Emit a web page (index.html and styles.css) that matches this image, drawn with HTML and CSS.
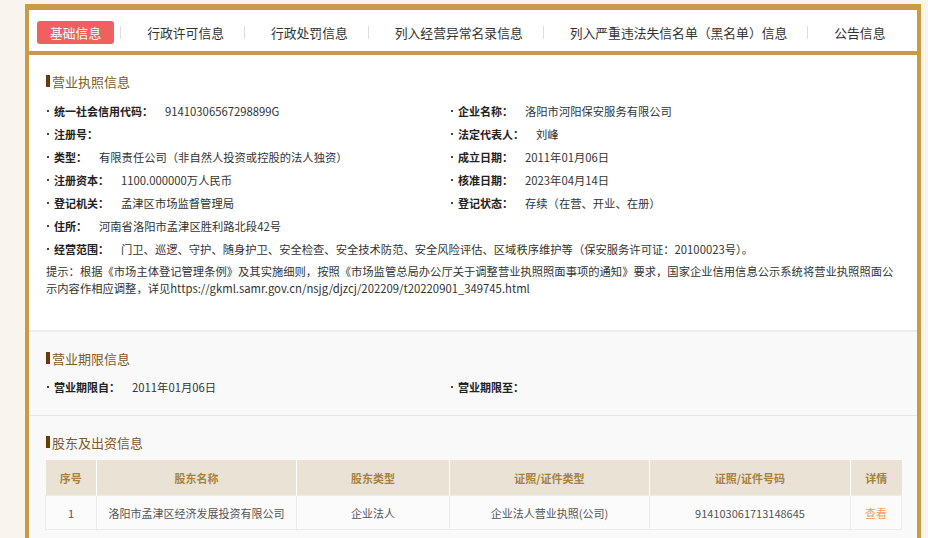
FILE: index.html
```html
<!DOCTYPE html>
<html lang="zh-CN">
<head>
    <meta charset="UTF-8">
    <title>基础信息</title>
    <link rel="stylesheet" href="styles.css">
</head>
<body>
    <div class="panel">
        <div class="tabs">
            <span class="tab active">基础信息</span>
            <span class="tab">行政许可信息</span>
            <span class="tab">行政处罚信息</span>
            <span class="tab">列入经营异常名录信息</span>
            <span class="tab">列入严重违法失信名单（黑名单）信息</span>
            <span class="tab">公告信息</span>
        </div>

        <div class="section license">
            <h3 class="title">营业执照信息</h3>
            <div class="fields">
                <div class="field"><b>统一社会信用代码：</b><span>91410306567298899G</span></div>
                <div class="field"><b>企业名称：</b><span>洛阳市河阳保安服务有限公司</span></div>
                <div class="field"><b>注册号：</b><span></span></div>
                <div class="field"><b>法定代表人：</b><span>刘峰</span></div>
                <div class="field"><b>类型：</b><span>有限责任公司（非自然人投资或控股的法人独资）</span></div>
                <div class="field"><b>成立日期：</b><span>2011年01月06日</span></div>
                <div class="field"><b>注册资本：</b><span>1100.000000万人民币</span></div>
                <div class="field"><b>核准日期：</b><span>2023年04月14日</span></div>
                <div class="field"><b>登记机关：</b><span>孟津区市场监督管理局</span></div>
                <div class="field"><b>登记状态：</b><span>存续（在营、开业、在册）</span></div>
                <div class="field wide"><b>住所：</b><span>河南省洛阳市孟津区胜利路北段42号</span></div>
                <div class="field wide"><b>经营范围：</b><span>门卫、巡逻、守护、随身护卫、安全检查、安全技术防范、安全风险评估、区域秩序维护等（保安服务许可证：20100023号）。</span></div>
            </div>
            <p class="hint">提示：根据《市场主体登记管理条例》及其实施细则，按照《市场监管总局办公厅关于调整营业执照照面事项的通知》要求，国家企业信用信息公示系统将营业执照照面公示内容作相应调整，详见https://gkml.samr.gov.cn/nsjg/djzcj/202209/t20220901_349745.html</p>
        </div>

        <div class="section term">
            <h3 class="title">营业期限信息</h3>
            <div class="fields">
                <div class="field"><b>营业期限自：</b><span>2011年01月06日</span></div>
                <div class="field"><b>营业期限至：</b><span></span></div>
            </div>
        </div>

        <div class="section holders">
            <h3 class="title">股东及出资信息</h3>
            <table class="grid">
                <colgroup>
                    <col class="c-no">
                    <col class="c-name">
                    <col class="c-type">
                    <col class="c-cert">
                    <col class="c-code">
                    <col class="c-more">
                </colgroup>
                <thead>
                    <tr>
                        <th>序号</th>
                        <th>股东名称</th>
                        <th>股东类型</th>
                        <th>证照/证件类型</th>
                        <th>证照/证件号码</th>
                        <th>详情</th>
                    </tr>
                </thead>
                <tbody>
                    <tr>
                        <td>1</td>
                        <td>洛阳市孟津区经济发展投资有限公司</td>
                        <td>企业法人</td>
                        <td>企业法人营业执照(公司)</td>
                        <td>914103061713148645</td>
                        <td><a class="view" href="#">查看</a></td>
                    </tr>
                </tbody>
            </table>
        </div>
    </div>
</body>
</html>
```

FILE: styles.css
```css
body {
    margin: 0;
    background-color: #f9f5ee;
    font-family: "Noto Sans CJK SC", "Open Sans", sans-serif;
    color: #333;
    overflow: hidden;
}

.panel {
    width: 888px;
    margin: 4px 0 0 25px;
    border: 4px solid #c99b45;
    border-top-width: 6px;
    border-bottom: none;
    background-color: #fff;
}

/* tab bar */
.tabs {
    display: flex;
    align-items: center;
    height: 41px;
    padding-left: 8px;
    border-bottom: 4px solid #c99b45;
    font-size: 12.8px;
    color: #333;
}

.tab {
    line-height: 13px;
    padding: 0 20px 0 26px;
    border-left: 1px solid #ddd;
    white-space: nowrap;
    margin-top: 3px;
}

.tab.active {
    border: none;
    padding: 5px 13px;
    margin-right: 6px;
    background-color: #f0605f;
    color: #fff;
    border-radius: 3px;
}

/* sections */
.section {
    padding: 16px 16px 17px;
    background-color: #f9f9f9;
}

.section.license {
    background-color: #fff;
    padding-bottom: 33px;
    border-bottom: 2px solid #ececec;
}

.section.term {
    border-bottom: 1px solid #e6e6e6;
}

.title {
    display: flex;
    align-items: center;
    margin: 0 0 7px 1px;
    height: 20px;
    font-size: 13px;
    font-weight: normal;
    color: #7d5a2a;
}

.title::before {
    content: "";
    width: 4px;
    height: 12px;
    margin-right: 2px;
    background-color: #6a3a0c;
}

.license .title {
    margin-bottom: 8px;
}

.fields {
    display: grid;
    grid-template-columns: 404px 1fr;
}

.field {
    display: flex;
    align-items: center;
    height: 23px;
    padding-left: 2px;
    font-size: 11.3px;
    white-space: nowrap;
}

.field::before {
    content: "";
    width: 2px;
    height: 2px;
    margin-right: 5px;
    background-color: #444;
}

.field.wide {
    grid-column: span 2;
}

.field b {
    font-size: 11px;
    color: #222;
    margin-right: 12px;
}

.hint {
    margin: 3px 0 0 1px;
    font-size: 11.3px;
    line-height: 17px;
    color: #333;
}

/* shareholder table */
.holders .title {
    margin-bottom: 8px;
}

.grid {
    width: 856px;
    border-collapse: collapse;
    table-layout: fixed;
    font-size: 11px;
    text-align: center;
}

.grid th {
    height: 35px;
    background-color: #e9e2d5;
    color: #a5823f;
    border-left: 1px solid #fff;
    padding: 0;
}

.grid th:first-child {
    border-left: none;
}

.grid td {
    height: 33px;
    padding: 0;
    color: #555;
    background-color: #fbfbfb;
    border: 1px solid #ececec;
}

.c-no, .c-more {
    width: 51px;
}

.c-name, .c-cert {
    width: 200px;
}

.c-type {
    width: 153px;
}

.c-code {
    width: 201px;
}

.view {
    color: #f39c5a;
    text-decoration: none;
}
```
